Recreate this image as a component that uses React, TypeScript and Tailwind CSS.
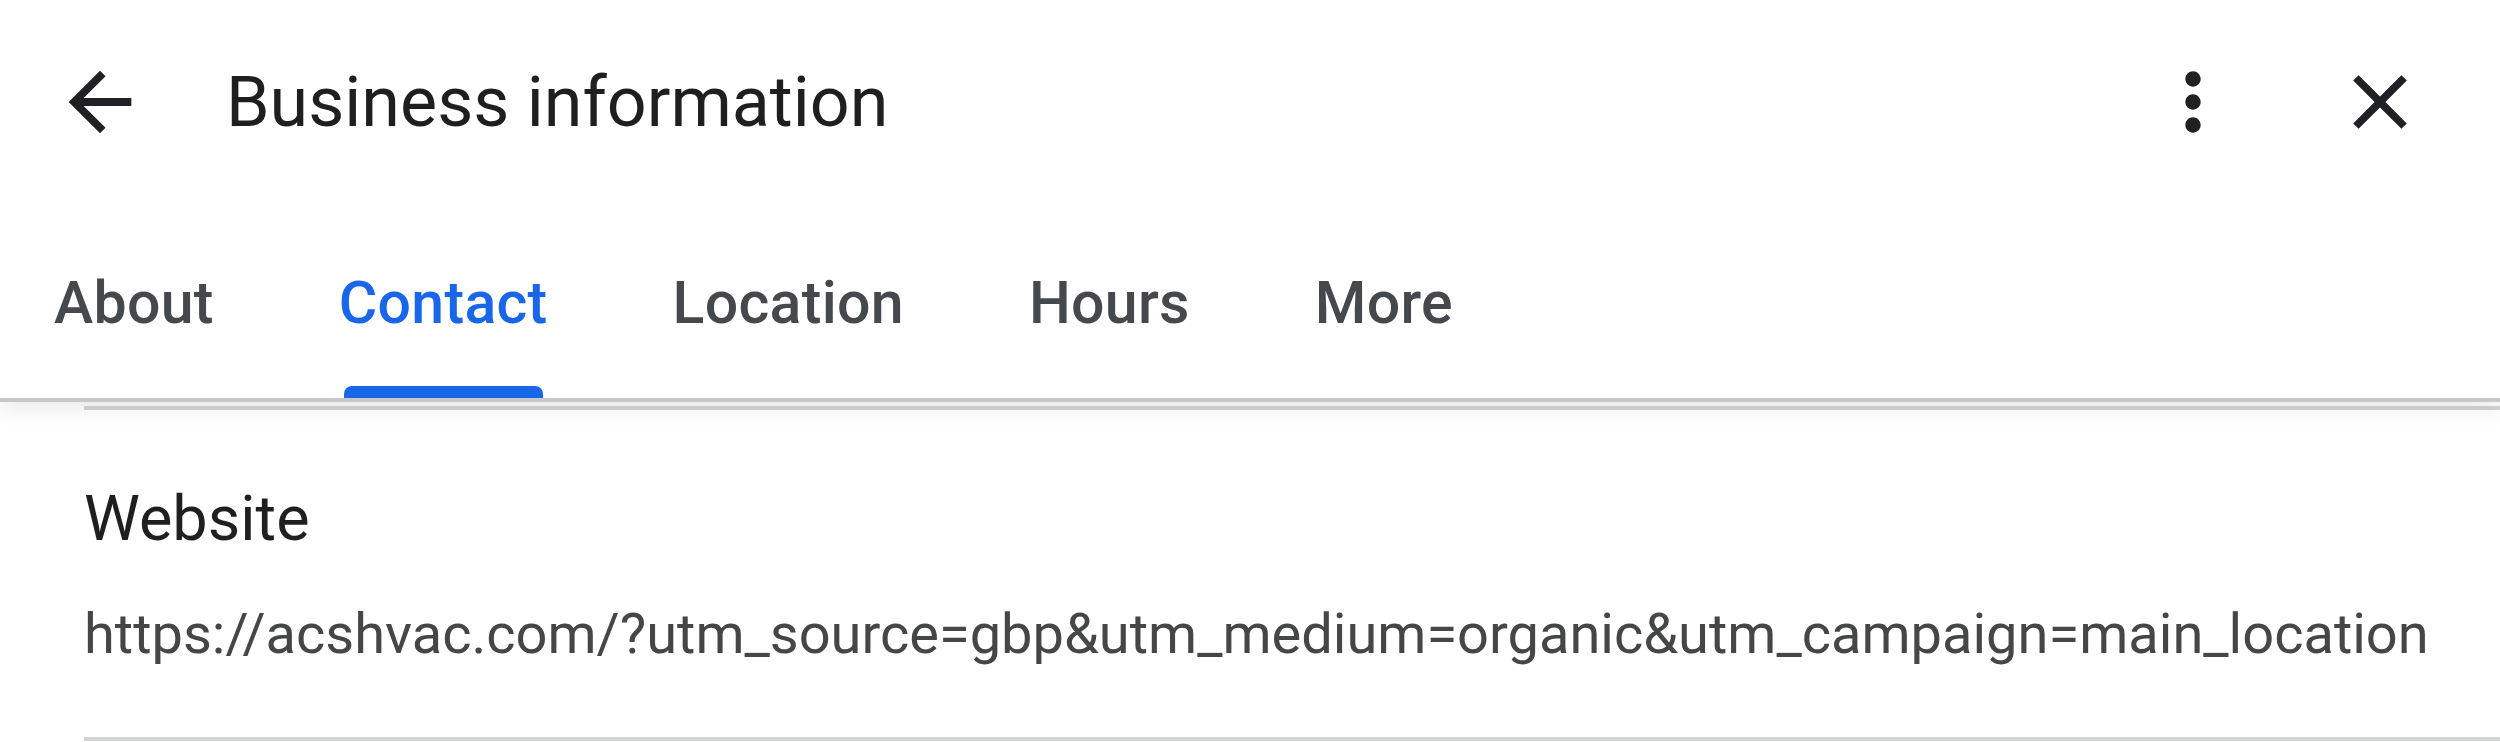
import { useState } from 'react'

const tabs = ['About', 'Contact', 'Location', 'Hours', 'More']

export default function App() {
  const [active, setActive] = useState('Contact')

  return (
    <div className="h-[742px] w-[2500px] overflow-hidden bg-white font-['Roboto',sans-serif]">
      {/* top bar + tabs */}
      <div className="relative z-10 border-b-4 border-[#c7c8cb] bg-white shadow-[0_6px_22px_rgba(0,0,0,0.09)]">
        <div className="flex h-[204px] items-center pl-[53px] pr-[74px]">
          <button className="h-[94px] w-[94px] text-[#202124]">
            <svg viewBox="0 0 24 24" className="h-full w-full" fill="currentColor">
              <path d="M20 11H7.83l5.59-5.59L12 4l-8 8 8 8 1.41-1.41L7.83 13H20v-2z" />
            </svg>
          </button>
          <h1 className="ml-[79px] text-[70px] leading-[80px] font-normal text-[#1f1f1f]">
            Business information
          </h1>
          <div className="ml-auto flex items-center gap-[95px] text-[#202124]">
            <button className="h-[92px] w-[92px]">
              <svg viewBox="0 0 24 24" className="h-full w-full" fill="currentColor">
                <path d="M12 8c1.1 0 2-.9 2-2s-.9-2-2-2-2 .9-2 2 .9 2 2 2zm0 2c-1.1 0-2 .9-2 2s.9 2 2 2 2-.9 2-2-.9-2-2-2zm0 6c-1.1 0-2 .9-2 2s.9 2 2 2 2-.9 2-2-.9-2-2-2z" />
              </svg>
            </button>
            <button className="h-[92px] w-[92px]">
              <svg viewBox="0 0 24 24" className="h-full w-full" fill="currentColor">
                <path d="M19 6.41L17.59 5 12 10.59 6.41 5 5 6.41 10.59 12 5 17.59 6.41 19 12 13.41 17.59 19 19 17.59 13.41 12z" />
              </svg>
            </button>
          </div>
        </div>

        <div className="flex h-[194px] gap-[125px] pl-[54px]">
          {tabs.map((tab) => (
            <button key={tab} onClick={() => setActive(tab)} className="flex h-full flex-col">
              <span
                className={
                  'flex flex-1 items-center pt-[16px] text-[59px] font-medium tracking-[0.3px] ' +
                  (tab === active ? 'text-[#1a66e8]' : 'text-[#45484c]')
                }
              >
                {tab}
              </span>
              <span
                className={
                  'mx-[5px] h-[12px] rounded-t-[8px] ' + (tab === active ? 'bg-[#1a66e8]' : 'bg-transparent')
                }
              />
            </button>
          ))}
        </div>
      </div>

      {/* contact section */}
      <div className="mt-[4px] pl-[84px]">
        <div className="border-t-4 border-b-4 border-[#d3d4d6] pt-[72px] pb-[71px]">
          <div className="text-[63px] leading-[74px] text-[#1f1f1f]">Website</div>
          <div className="mt-[46px] text-[56px] leading-[64px] whitespace-nowrap text-[#444746]">
            https://acshvac.com/?utm_source=gbp&amp;utm_medium=organic&amp;utm_campaign=main_location
          </div>
        </div>
      </div>
    </div>
  )
}
